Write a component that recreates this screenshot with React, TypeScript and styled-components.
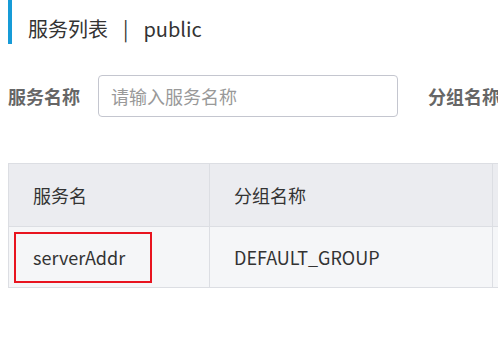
import React from "react";
import styled, { createGlobalStyle } from "styled-components";

const Global = createGlobalStyle`
  html, body { margin: 0; padding: 0; background: #fff; overflow: hidden; }
  body { font-family: "Noto Sans CJK SC", "Noto Sans", sans-serif; color: #333; }
  * { box-sizing: border-box; }
`;

const Page = styled.div`
  width: 498px;
  height: 353px;
  padding-left: 8px;
  overflow: hidden;
`;

const TitleBar = styled.div`
  height: 44px;
  border-left: 4px solid #179bd7;
  padding-left: 16px;
  display: flex;
  align-items: center;
  padding-top: 13px;
  font-size: 20px;
  color: #333;
  white-space: nowrap;
`;

const Sep = styled.span`
  margin: 0 15px 0 15px;
`;

const Filters = styled.div`
  margin-top: 31px;
  display: flex;
  align-items: center;
  height: 42px;
  white-space: nowrap;
`;

const Label = styled.span`
  flex-shrink: 0;
  font-size: 18px;
  font-weight: 700;
  color: #666;
  margin-right: 18px;
`;

const Input = styled.input`
  flex-shrink: 0;
  width: 300px;
  height: 42px;
  border: 1px solid #c4c6cf;
  border-radius: 4px;
  padding: 0 12px;
  font-family: inherit;
  font-size: 18px;
  color: #333;
  margin-right: 30px;
  outline: none;
  &::placeholder { color: #999; }
`;

const Table = styled.div`
  margin-top: 46px;
  width: 700px;
  border: 1px solid #dcdee3;
`;

const Row = styled.div<{ $head?: boolean }>`
  display: grid;
  grid-template-columns: 200px 283px 1fr;
  height: ${(p) => (p.$head ? "62px" : "61px")};
  background: ${(p) => (p.$head ? "#ebecf0" : "#f5f6f8")};
  border-top: ${(p) => (p.$head ? "none" : "1px solid #dcdee3")};
`;

const Cell = styled.div`
  position: relative;
  display: flex;
  align-items: center;
  padding-left: 24px;
  font-size: 18px;
  color: #333;
  white-space: nowrap;
  & + & { border-left: 1px solid #dcdee3; padding-left: 24px; }
`;

const Highlight = styled.div`
  position: absolute;
  left: 5px;
  top: 5px;
  width: 138px;
  height: 51px;
  border: 2px solid #e8141f;
  pointer-events: none;
`;

export default function App() {
  return (
    <Page>
      <Global />
      <TitleBar>
        服务列表<Sep>|</Sep>public
      </TitleBar>
      <Filters>
        <Label>服务名称</Label>
        <Input placeholder="请输入服务名称" />
        <Label>分组名称</Label>
      </Filters>
      <Table>
        <Row $head>
          <Cell>服务名</Cell>
          <Cell>分组名称</Cell>
          <Cell />
        </Row>
        <Row>
          <Cell>
            serverAddr
            <Highlight />
          </Cell>
          <Cell>DEFAULT_GROUP</Cell>
          <Cell />
        </Row>
      </Table>
    </Page>
  );
}
